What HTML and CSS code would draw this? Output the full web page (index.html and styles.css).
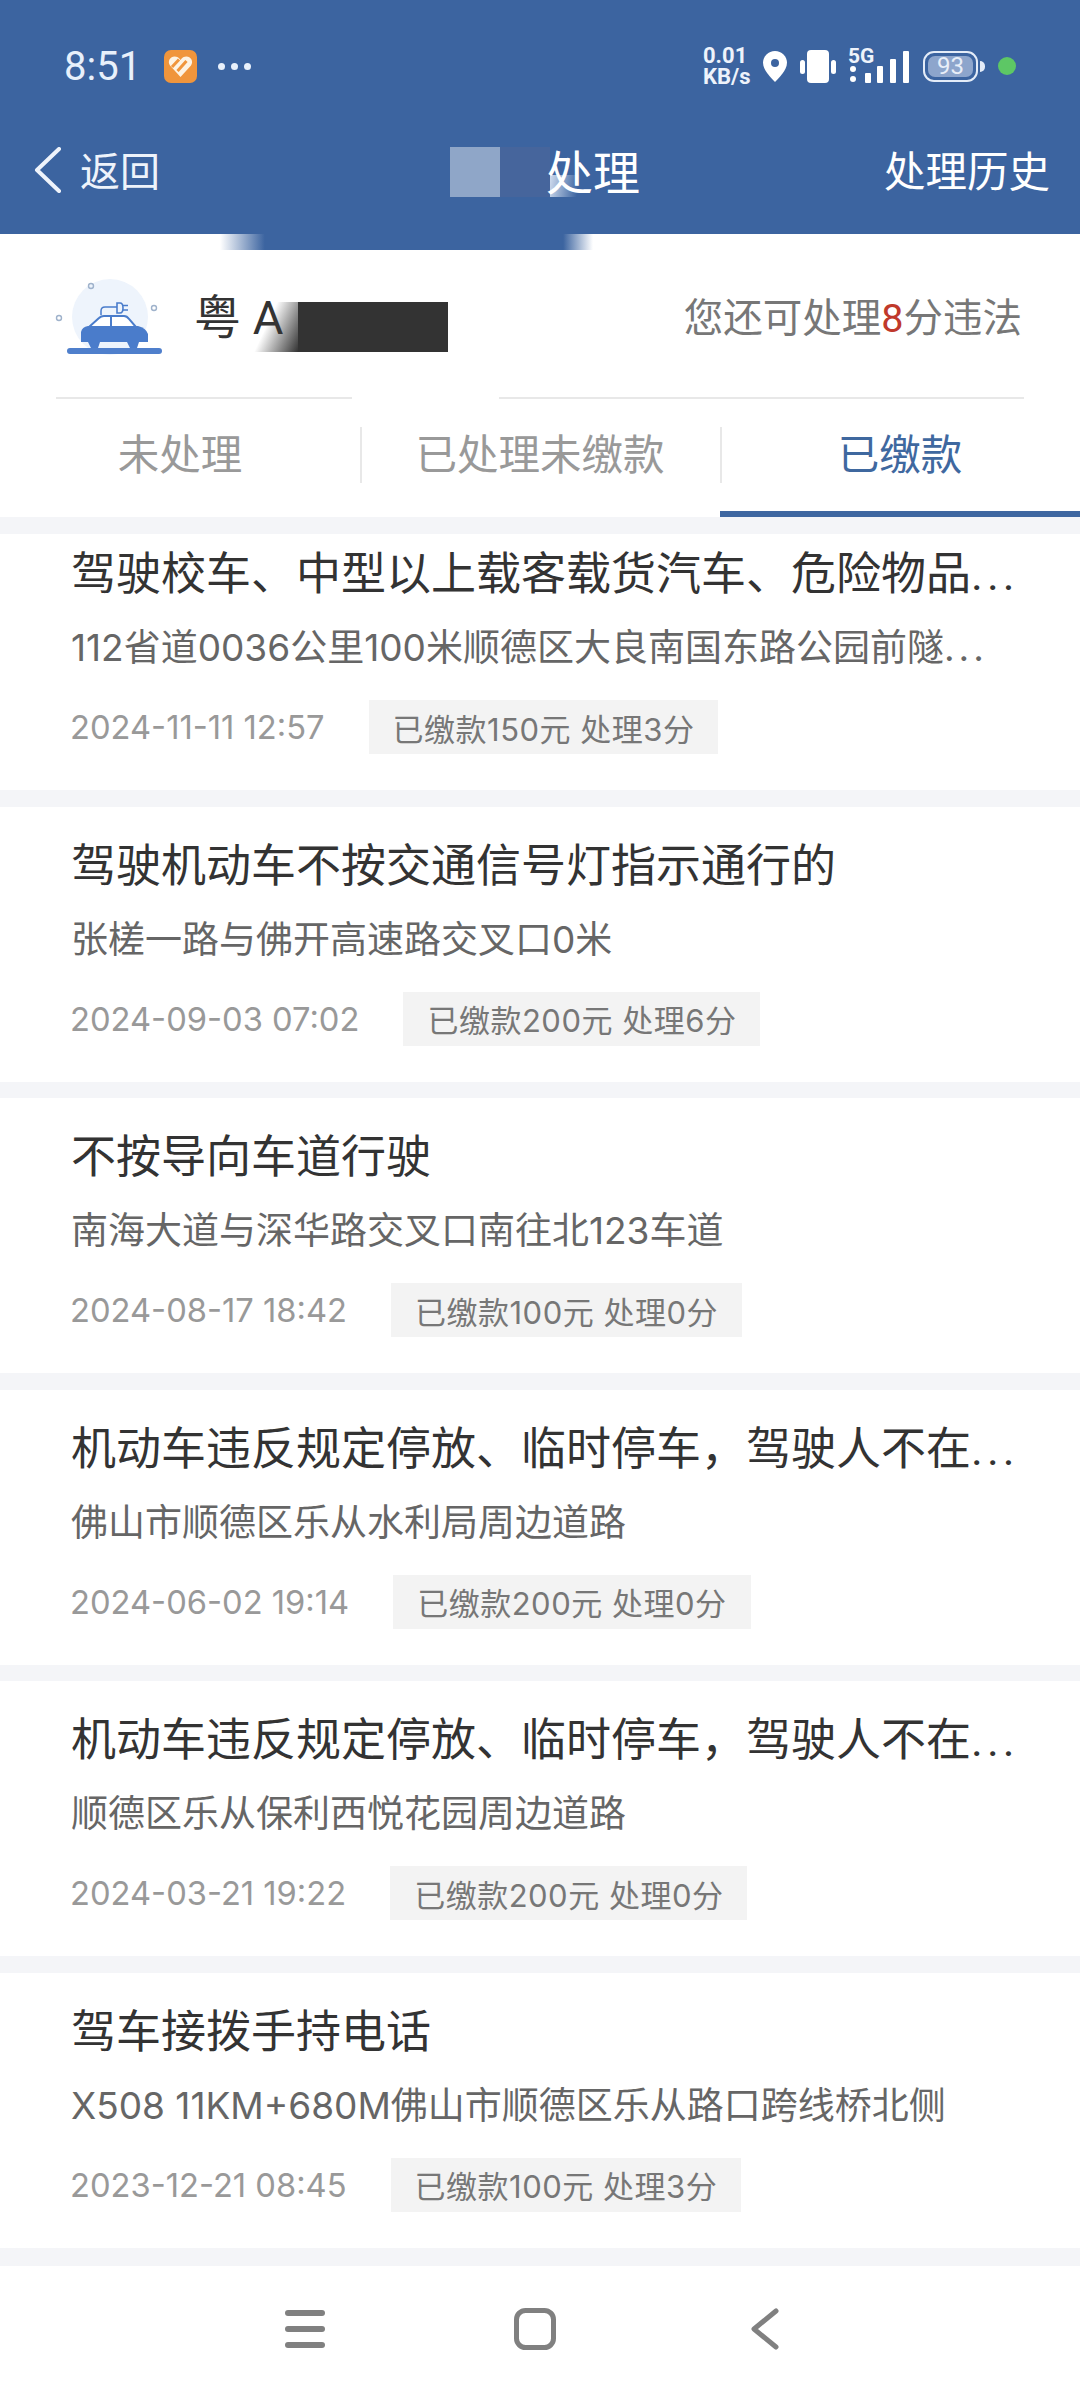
FILE: index.html
```html
<!DOCTYPE html>
<html lang="zh-CN">
<head>
    <meta charset="UTF-8" />
    <title>违法处理</title>
    <link rel="stylesheet" href="styles.css">
</head>
<body>
<div class="phone">

    <!-- ===== BLUE HEADER ===== -->
    <header class="header">
        <div class="status">
            <span class="time">8:51</span>
            <svg class="app-icon" viewBox="0 0 33 33">
                <rect width="33" height="33" rx="7" fill="#f0953c" />
                <path d="M16.5 27 L6 15.5 C3 11 6.5 6.5 10.5 6.5 C13 6.5 15 7.5 16.5 10 C18 7.5 20 6.5 22.5 6.5 C26.5 6.5 30 11 27 15.5 Z" fill="#fdf3e4" />
                <path d="M8 17 L15 9.5 M13.5 21 L22.5 11" stroke="#f0953c" stroke-width="3" fill="none" />
            </svg>
            <span class="more"><i></i><i></i><i></i></span>

            <div class="status-right">
                <span class="net">0.01<br>KB/s</span>
                <svg class="pin" viewBox="0 0 24 31">
                    <path d="M12 0C5.4 0 0 5.2 0 11.8C0 19 8 27 12 31C16 27 24 19 24 11.8C24 5.2 18.6 0 12 0Z" fill="#fff" />
                    <circle cx="12" cy="12" r="4" fill="#3c64a0" />
                </svg>
                <svg class="vibrate" viewBox="0 0 36 33">
                    <rect x="7" y="0" width="22" height="33" rx="4" fill="#fff" />
                    <rect x="0" y="10" width="5" height="14" rx="2.5" fill="#fff" />
                    <rect x="31" y="10" width="5" height="14" rx="2.5" fill="#fff" />
                </svg>
                <div class="signal">
                    <span class="signal-text">5G</span>
                    <svg viewBox="0 0 61 34">
                        <circle cx="5" cy="20" r="3" fill="#fff" />
                        <circle cx="5" cy="30" r="3" fill="#fff" />
                        <rect x="17" y="24" width="6" height="10" rx="1" fill="#fff" />
                        <rect x="29" y="17" width="6" height="17" rx="1" fill="#fff" />
                        <rect x="42" y="10" width="6" height="24" rx="1" fill="#fff" />
                        <rect x="55" y="2" width="6" height="32" rx="1" fill="#fff" />
                    </svg>
                </div>
                <span class="battery"><span class="battery-fill">93</span></span>
                <span class="green-dot"></span>
            </div>
        </div>

        <nav class="nav">
            <a class="back">
                <svg viewBox="0 0 28 46" fill="none" stroke="#eef3fb" stroke-width="4" stroke-linecap="round" stroke-linejoin="round">
                    <path d="M25 2 L3 23 L25 44" />
                </svg>
                返回
            </a>
            <div class="title">
                <span class="blur-a"></span>
                <span class="blur-b"></span>
                <span class="title-text">处理</span>
            </div>
            <a class="history">处理历史</a>
        </nav>
        <div class="header-smear"></div>
    </header>

    <!-- ===== CAR INFO ===== -->
    <section class="car">
        <svg class="car-icon" viewBox="0 -4 130 100">
            <circle cx="70" cy="46" r="38" fill="#eef4fc" />
            <circle cx="51" cy="15" r="2.5" fill="none" stroke="#9fb2cb" stroke-width="1.4" />
            <circle cx="19" cy="47" r="2.5" fill="none" stroke="#9fb2cb" stroke-width="1.4" />
            <circle cx="114" cy="37" r="2.5" fill="none" stroke="#9fb2cb" stroke-width="1.4" />
            <path d="M61 44 V40 Q61 36 65 36 H77" fill="none" stroke="#4a7ccb" stroke-width="1.5" />
            <path d="M77 32 H80 Q83 32 83 37 Q83 42 80 42 H77 Z" fill="#eef4fc" stroke="#4a7ccb" stroke-width="1.6" />
            <path d="M83 34.5 H88 M83 39 H88" stroke="#4a7ccb" stroke-width="1.6" />
            <path d="M49 56 L59 47 Q61 45 64 45 H84 Q87 45 89 48 L96 56 Z" fill="#fff" stroke="#4a7ccb" stroke-width="2" />
            <path d="M71 45 V56" stroke="#4a7ccb" stroke-width="2" />
            <path d="M41 61 Q42 56 48 55 H98 Q106 57 108 63 V71 H41 Z" fill="#4a7ccb" />
            <path d="M48 71 H60 L58 77 H51 Z M87 71 H99 L97 77 H90 Z" fill="#4a7ccb" />
            <rect x="27" y="77" width="95" height="6" rx="3" fill="#4f7fcc" />
        </svg>
        <div class="plate">粤 A<span class="plate-mask"></span></div>
        <div class="quota">您还可处理<em>8</em>分违法</div>
        <div class="line-smear"></div>
    </section>

    <!-- ===== TABS ===== -->
    <div class="tabs">
        <div class="tab">未处理</div>
        <div class="tab">已处理未缴款</div>
        <div class="tab active">已缴款</div>
    </div>

    <!-- ===== RECORDS ===== -->
    <main class="list">
        <article class="record first">
            <h2>驾驶校车、中型以上载客载货汽车、危险物品<span class="dots">...</span></h2>
            <p>112省道0036公里100米顺德区大良南国东路公园前隧<span class="dots">...</span></p>
            <div class="meta"><span class="date">2024-11-11 12:57</span><span class="fee">已缴款150元 处理3分</span></div>
        </article>
        <article class="record">
            <h2>驾驶机动车不按交通信号灯指示通行的</h2>
            <p>张槎一路与佛开高速路交叉口0米</p>
            <div class="meta"><span class="date">2024-09-03 07:02</span><span class="fee">已缴款200元 处理6分</span></div>
        </article>
        <article class="record">
            <h2>不按导向车道行驶</h2>
            <p>南海大道与深华路交叉口南往北123车道</p>
            <div class="meta"><span class="date">2024-08-17 18:42</span><span class="fee">已缴款100元 处理0分</span></div>
        </article>
        <article class="record">
            <h2>机动车违反规定停放、临时停车，驾驶人不在<span class="dots">...</span></h2>
            <p>佛山市顺德区乐从水利局周边道路</p>
            <div class="meta"><span class="date">2024-06-02 19:14</span><span class="fee">已缴款200元 处理0分</span></div>
        </article>
        <article class="record">
            <h2>机动车违反规定停放、临时停车，驾驶人不在<span class="dots">...</span></h2>
            <p>顺德区乐从保利西悦花园周边道路</p>
            <div class="meta"><span class="date">2024-03-21 19:22</span><span class="fee">已缴款200元 处理0分</span></div>
        </article>
        <article class="record">
            <h2>驾车接拨手持电话</h2>
            <p>X508 11KM+680M佛山市顺德区乐从路口跨线桥北侧</p>
            <div class="meta"><span class="date">2023-12-21 08:45</span><span class="fee">已缴款100元 处理3分</span></div>
        </article>
    </main>

    <!-- ===== SYSTEM NAV ===== -->
    <footer class="sysnav">
        <svg viewBox="0 0 40 38" width="40" height="38" fill="#808080">
            <rect y="0" width="40" height="6" rx="3" />
            <rect y="16" width="40" height="6" rx="3" />
            <rect y="32" width="40" height="6" rx="3" />
        </svg>
        <svg viewBox="0 0 42 42" width="42" height="42" fill="none" stroke="#808080" stroke-width="5">
            <rect x="2.5" y="2.5" width="37" height="37" rx="9" />
        </svg>
        <svg viewBox="0 0 28 42" width="28" height="42" fill="none" stroke="#808080" stroke-width="5" stroke-linecap="round" stroke-linejoin="round">
            <path d="M25 3 L3 21 L25 39" />
        </svg>
    </footer>
</div>
</body>
</html>
```

FILE: styles.css
```css
:root {
    --blue: #3c64a0;
    --cjk: Roboto, "Noto Sans CJK SC", sans-serif;
    --cjk-num: Inter, "Noto Sans CJK SC", sans-serif;
}
* { box-sizing: border-box; }

body {
    margin: 0;
    font-family: var(--cjk);
    background: #fff;
}

.phone {
    width: 1080px;
    height: 2400px;
    display: flex;
    flex-direction: column;
    overflow: hidden;
    background: #f4f5f8;
}

/* ────────── Header ────────── */
.header {
    position: relative;
    height: 234px;
    background: var(--blue);
    color: #fff;
    flex: none;
}
.header-smear {
    position: absolute;
    top: 100%;
    left: 220px;
    width: 373px;
    height: 16px;
    z-index: 2;
    background: linear-gradient(90deg, #fff 0, var(--blue) 12%, var(--blue) 92%, #fff 100%);
}

.status {
    height: 132px;
    display: flex;
    align-items: center;
    padding: 0 64px 0 64px;
}
.time {
    font-size: 40px;
    color: #e8f0fb;
    margin-right: 23px;
}
.app-icon {
    width: 33px;
    height: 33px;
    margin-right: 21px;
}
.more {
    display: flex;
    gap: 6px;
}
.more i {
    width: 7px;
    height: 7px;
    border-radius: 50%;
    background: #e8f0fb;
}
.status-right {
    margin-left: auto;
    display: flex;
    align-items: center;
}
.net {
    font-size: 22px;
    font-weight: 700;
    line-height: 21px;
    width: 50px;
    margin-right: 10px;
    color: #eef3fb;
    white-space: nowrap;
}
.pin {
    width: 24px;
    height: 31px;
    margin-right: 13px;
}
.vibrate {
    width: 36px;
    height: 33px;
    margin-right: 12px;
}
.signal {
    position: relative;
    width: 61px;
    height: 34px;
    margin-right: 14px;
}
.signal svg {
    display: block;
    width: 61px;
    height: 34px;
}
.signal-text {
    position: absolute;
    left: 0;
    top: 0;
    font-size: 21px;
    font-weight: 700;
    line-height: 15px;
    color: #eef3fb;
}
.battery {
    position: relative;
    width: 55px;
    height: 31px;
    border: 2px solid #e4ecf8;
    border-radius: 11px;
    padding: 3px;
    margin-right: 20px;
}
.battery::after {
    content: "";
    position: absolute;
    left: 55px;
    top: 8px;
    width: 5px;
    height: 11px;
    border-radius: 0 5px 5px 0;
    background: #e4ecf8;
}
.battery-fill {
    display: flex;
    align-items: center;
    justify-content: center;
    height: 100%;
    border-radius: 7px;
    background: #8da5cc;
    color: #e8eef8;
    font-size: 24px;
}
.green-dot {
    width: 18px;
    height: 18px;
    border-radius: 50%;
    background: #5dc765;
}

.nav {
    display: grid;
    grid-template-columns: 416px auto 1fr;
    align-items: center;
    height: 80px;
    margin-top: -3px;
    padding: 0 30px 0 34px;
}
.back {
    display: flex;
    align-items: center;
    gap: 18px;
    font-size: 40px;
    color: #eef3fb;
}
.back svg {
    width: 28px;
    height: 46px;
    margin-top: 2px;
}
.title {
    display: flex;
    align-items: center;
    font-size: 47px;
}
.title-text {
    position: relative;
    margin-left: -4px;
}
.blur-a,
.blur-b {
    width: 50px;
    height: 50px;
    margin-top: 6px;
}
.blur-a { background: #8fa6c8; }
.blur-b {
    position: relative;
    background: #46659c;
}
.blur-b::after {
    content: "";
    position: absolute;
    left: 100%;
    bottom: 0;
    width: 30px;
    height: 22px;
    background: linear-gradient(100deg, #d0dcee, rgba(208,220,238,0) 90%);
}
.history {
    justify-self: end;
    font-size: 41.5px;
}

/* ────────── Car info ────────── */
.car {
    position: relative;
    flex: none;
    height: 165px;
    margin: 0;
    padding: 0 58px 0 40px;
    display: flex;
    align-items: center;
    background: #fff;
    background-image: linear-gradient(#e8e8e8, #e8e8e8);
    background-repeat: no-repeat;
    background-position: 56px 100%;
    background-size: 968px 2px;
}
.line-smear {
    position: absolute;
    left: 352px;
    bottom: 0;
    width: 147px;
    height: 2px;
    background: #fff;
}
.car-icon {
    width: 130px;
    height: 100px;
    margin-right: 24px;
}
.plate {
    display: flex;
    align-items: center;
    font-size: 47px;
    color: #333;
    padding-bottom: 6px;
}
.plate-mask {
    position: relative;
    width: 150px;
    height: 50px;
    margin: 26px 0 0 15px;
    background: #333;
}
.plate-mask::before {
    content: "";
    position: absolute;
    right: 100%;
    top: 0;
    width: 50px;
    height: 100%;
    background: linear-gradient(115deg, rgba(51,51,51,0) 40%, #333 100%);
}
.quota {
    margin-left: auto;
    font-size: 39.5px;
    color: #777;
    padding-bottom: 5px;
}
.quota em {
    font-style: normal;
    color: #c0392b;
}

/* ────────── Tabs ────────── */
.tabs {
    flex: none;
    height: 118px;
    display: flex;
    background: #fff;
}
.tab {
    position: relative;
    flex: 1;
    display: flex;
    align-items: center;
    justify-content: center;
    padding-bottom: 12px;
    font-size: 41.5px;
    color: #999;
}
.tab + .tab::before {
    content: "";
    position: absolute;
    left: 0;
    top: 28px;
    width: 2px;
    height: 56px;
    background: #e8e8e8;
}
.tab.active {
    color: #3f689f;
    border-bottom: 6px solid #3e67a1;
    padding-bottom: 6px;
}

/* ────────── Records ────────── */
.list {
    flex: 1;
    min-height: 0;
    margin: 17px 0;
    overflow: hidden;
}
.record {
    height: 275px;
    margin-top: 16.6px;
    padding: 30px 0 0 71px;
    background: #fff;
}
.record.first {
    margin-top: -19px;
}
.record h2 {
    margin: 0;
    font-size: 45px;
    font-weight: 400;
    line-height: 60px;
    color: #333;
    white-space: nowrap;
}
.record p {
    margin: 17px 0 0;
    font-family: var(--cjk-num);
    font-size: 37px;
    line-height: 51px;
    color: #666;
    white-space: nowrap;
}
.record .dots {
    letter-spacing: 4px;
}
.meta {
    display: flex;
    align-items: center;
    gap: 44px;
    margin-top: 27px;
}
.date {
    margin-left: -1px;
    font-family: var(--cjk-num);
    font-size: 32.7px;
    color: #999;
}
.fee {
    height: 54px;
    padding: 0 24px;
    display: flex;
    align-items: center;
    white-space: pre;
    font-family: var(--cjk-num);
    font-size: 31px;
    letter-spacing: .5px;
    color: #777;
    background: #f3f3f3;
}

/* ────────── System nav ────────── */
.sysnav {
    flex: none;
    height: 134px;
    margin-top: -17px;
    padding: 0 0 8px 190px;
    display: grid;
    grid-template-columns: repeat(3, 230px);
    align-items: center;
    justify-items: center;
    background: #fff;
}
```
